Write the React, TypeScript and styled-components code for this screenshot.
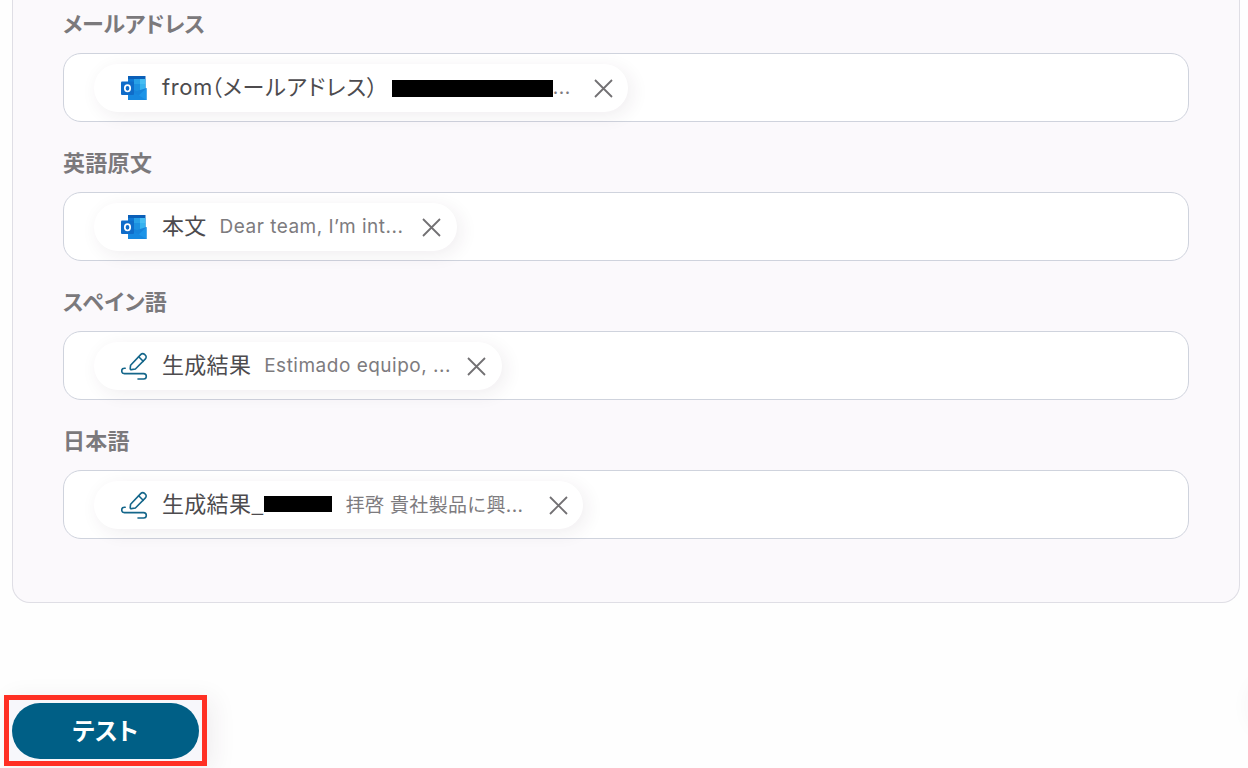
import React from "react";
import styled, { createGlobalStyle } from "styled-components";

const GlobalStyle = createGlobalStyle`
  * {
    box-sizing: border-box;
  }
  body {
    margin: 0;
    background-color: #fefefe;
    overflow: hidden;
    font-family: Inter, "Noto Sans CJK JP", sans-serif;
  }
`;

const Page = styled.div`
  height: 768px;
  overflow: hidden;
`;

const Panel = styled.section`
  width: 1228px;
  height: 620px;
  margin: -17px 0 0 12px;
  padding: 0 50px;
  background-color: #fbf9fc;
  border: 1px solid #dfdee5;
  border-top: none;
  border-radius: 0 0 18px 18px;
`;

const Label = styled.div<{ $spacing?: number }>`
  height: 70px;
  padding: 22px 0 14px;
  color: #7b797c;
  font-family: "Noto Sans CJK JP", sans-serif;
  font-size: 22px;
  font-weight: 700;
  line-height: 34px;
  letter-spacing: ${({ $spacing }) => $spacing ?? 0.3}px;
  font-feature-settings: "palt";
`;

const Field = styled.div`
  height: 69px;
  padding: 10px 30px;
  background-color: #fff;
  border: 1px solid #cfd3dd;
  border-radius: 18px;
`;

const Chip = styled.div<{ $width: number }>`
  display: flex;
  align-items: center;
  width: ${({ $width }) => $width}px;
  height: 48px;
  padding: 0 15px 0 27px;
  background-color: #fff;
  border-radius: 24px;
  box-shadow: 4px 4px 18px rgba(60, 40, 70, 0.08);
  white-space: nowrap;
  svg {
    flex-shrink: 0;
  }
`;

const Name = styled.div<{ $spacing?: number }>`
  display: flex;
  align-items: center;
  height: 48px;
  margin-left: 14px;
  padding-bottom: 7px;
  color: #4d4b4e;
  font-family: "Noto Sans CJK JP", sans-serif;
  font-size: 22px;
  letter-spacing: ${({ $spacing }) => $spacing ?? 0.3}px;
  font-feature-settings: "palt";
`;

const Latin = styled.span`
  margin: 5px -2px 0 0;
  font-family: Inter, sans-serif;
  font-size: 22px;
  letter-spacing: 0.6px;
`;

const Preview = styled.div<{ $gap: number; $spacing: number; $raise?: number }>`
  display: flex;
  align-items: center;
  height: 48px;
  margin-left: ${({ $gap }) => $gap}px;
  padding-bottom: ${({ $raise }) => $raise ?? 2}px;
  color: #7d7b7e;
  font-size: 19px;
  letter-spacing: ${({ $spacing }) => $spacing}px;
`;

const Mask = styled.span<{ $width: number; $height: number; $drop?: number }>`
  width: ${({ $width }) => $width}px;
  height: ${({ $height }) => $height}px;
  margin-top: ${({ $drop }) => $drop ?? 2}px;
  background-color: #000;
`;

const Close = styled.button<{ $inset?: number }>`
  display: flex;
  margin-left: auto;
  margin-right: ${({ $inset }) => $inset ?? 0}px;
  padding: 0;
  border: none;
  background: none;
`;

const Actions = styled.div`
  display: flex;
  align-items: center;
  justify-content: space-between;
  width: 1340px;
  height: 71px;
  margin-top: 92px;
  padding-left: 4px;
`;

const Highlight = styled.div`
  width: 203px;
  height: 71px;
  padding: 3px;
  border: 5px solid #ff3024;
  background-color: #f7f7fb;
  box-shadow: 6px 4px 24px rgba(60, 40, 70, 0.08);
`;

const TestButton = styled.button`
  display: block;
  width: 187px;
  height: 56px;
  padding: 0 0 2px;
  border: none;
  border-radius: 28px;
  background-color: #005f86;
  color: #fff;
  font-family: "Noto Sans CJK JP", sans-serif;
  font-size: 24px;
  font-weight: 700;
  line-height: 54px;
  letter-spacing: 0.4px;
  font-feature-settings: "palt";
`;

const FloatingButton = styled.div`
  width: 88px;
  height: 56px;
  margin-top: -50px;
  border-radius: 28px;
  box-shadow: 0 0 24px rgba(60, 40, 70, 0.06);
`;

const OutlookIcon = () => (
  <svg width="27" height="26" viewBox="0 0 27 26">
    <path d="M7 1h17.5v13H7z" fill="#0a5fb8" />
    <path d="M7 4h6v5H7z" fill="#0f78d4" />
    <path d="M13 4h6v5h-6z" fill="#28a0e6" />
    <path d="M19 4h5.5v5H19z" fill="#45bdf3" />
    <path d="M7 9h6v6H7z" fill="#0c6fca" />
    <path d="M13 9h6v7h-6z" fill="#1c90e0" />
    <path d="M19 9h5.5v6H19z" fill="#35b2ef" />
    <path d="M7 13l9 3 9.5-3v12H7z" fill="#1684db" />
    <path d="M25.5 13v12H13z" fill="#1c94e8" />
    <path d="M7 14l18.5 11H7z" fill="#1688e0" />
    <rect y="6.5" width="13" height="13.5" rx="1" fill="#0f6cc9" />
    <ellipse cx="6.5" cy="13.3" rx="2.7" ry="3.2" fill="none" stroke="#fff" strokeWidth="1.7" />
  </svg>
);

const PenIcon = () => (
  <svg width="27" height="28" viewBox="0 0 27 28" fill="none" stroke="#14668a" strokeWidth="1.6" strokeLinecap="round" strokeLinejoin="round">
    <path d="M9.6 13.2 19.9 2.4a2.5 2.5 0 0 1 3.6 0l.9.9a2.5 2.5 0 0 1 0 3.6L14.4 17l-4.1.6a1 1 0 0 1-1.1-1.1z" />
    <path d="m17.7 4.8 4.5 4.5" />
    <path d="M4.2 16.2h-.8a2.6 2.6 0 0 0 0 5.4h19.2a2.7 2.7 0 0 1 0 5.4H17" />
  </svg>
);

const CloseIcon = () => (
  <svg width="19" height="19" viewBox="0 0 19 19" fill="none" stroke="#727073" strokeWidth="1.8">
    <path d="m1 1 17 17M18 1 1 18" />
  </svg>
);

const CloseButton = ({ inset }: { inset?: number }) => (
  <Close type="button" aria-label="close" $inset={inset}>
    <CloseIcon />
  </Close>
);

const App = () => (
  <Page>
    <GlobalStyle />
    <Panel>
      <Label $spacing={-0.2}>メールアドレス</Label>
      <Field>
        <Chip $width={534}>
          <OutlookIcon />
          <Name $spacing={0.8}>
            <Latin>from</Latin>（メールアドレス）
          </Name>
          <Preview $gap={13} $spacing={0.5}>
            <Mask $width={161} $height={17} $drop={3} />
            ...
          </Preview>
          <CloseButton />
        </Chip>
      </Field>
      <Label>英語原文</Label>
      <Field>
        <Chip $width={363}>
          <OutlookIcon />
          <Name>本文</Name>
          <Preview $gap={13} $spacing={0.48}>Dear team, I’m int...</Preview>
          <CloseButton inset={1} />
        </Chip>
      </Field>
      <Label>スペイン語</Label>
      <Field>
        <Chip $width={408}>
          <PenIcon />
          <Name>生成結果</Name>
          <Preview $gap={13} $spacing={0.5}>Estimado equipo, ...</Preview>
          <CloseButton inset={1} />
        </Chip>
      </Field>
      <Label>日本語</Label>
      <Field>
        <Chip $width={489}>
          <PenIcon />
          <Name>
            生成結果_
            <Mask $width={68} $height={16} $drop={5} />
          </Name>
          <Preview $gap={14} $spacing={0.3} $raise={4}>拝啓 貴社製品に興...</Preview>
          <CloseButton />
        </Chip>
      </Field>
    </Panel>
    <Actions>
      <Highlight>
        <TestButton type="button">テスト</TestButton>
      </Highlight>
      <FloatingButton />
    </Actions>
  </Page>
);

export default App;
